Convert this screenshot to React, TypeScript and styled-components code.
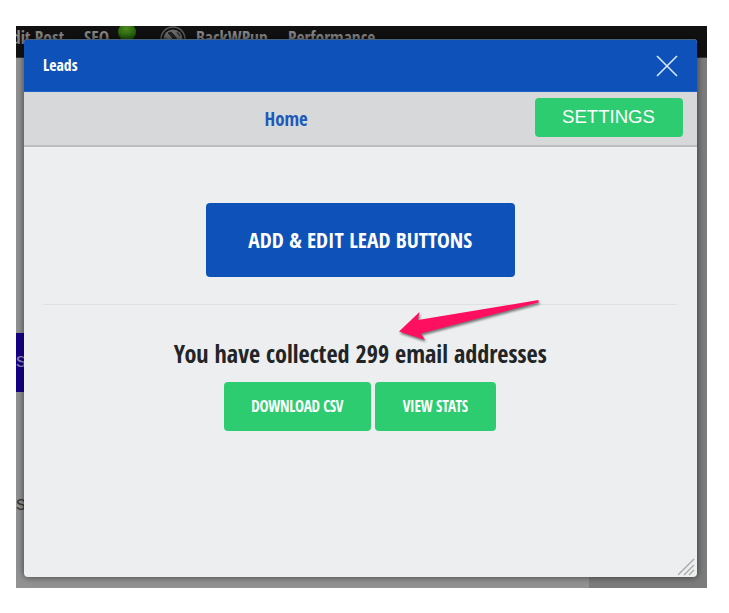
import React from 'react';
import styled, { createGlobalStyle } from 'styled-components';

const Global = createGlobalStyle`
  body { margin: 0; background: #fff; }
  * { box-sizing: border-box; }
`;

const condensed = `'Open Sans Condensed', 'Open Sans', 'Noto Sans', sans-serif`;

const Page = styled.main`
  width: 729px;
  height: 613px;
  padding: 26px 22px 25px 16px;
  overflow: hidden;
`;

const Site = styled.div`
  position: relative;
  height: 562px;
  overflow: hidden;
  background: linear-gradient(to right, #929292 0 573px, #7c7c7c 573px);
  font-family: 'Liberation Sans', Arial, sans-serif;
`;

const AdminBar = styled.div`
  display: flex;
  height: 32px;
  background: #111;
  border-bottom: 1px solid #333;
  color: #858585;
  font: 700 17.5px/23px ${condensed};
  font-stretch: 75%;
`;

const AdminItem = styled.span<{ $gap: number; $width: number }>`
  display: flex;
  flex: none;
  width: ${p => p.$width}px;
  margin-left: ${p => p.$gap}px;
  white-space: nowrap;
`;

const Status = styled.i`
  width: 18px;
  height: 18px;
  margin: -3px 0 0 9px;
  border-radius: 50%;
  background: radial-gradient(circle at 45% 30%, #4f8a20, #205b08 65%, #123d04);
`;

const SiteBlock = styled.div<{ $gap: number; $height: number; $bg: string; $color: string }>`
  width: 60px;
  height: ${p => p.$height}px;
  margin-top: ${p => p.$gap}px;
  background: ${p => p.$bg};
  color: ${p => p.$color};
  font-size: 20px;
  line-height: ${p => p.$height - 4}px;
`;

const Modal = styled.section`
  position: absolute;
  left: 8px;
  top: 13px;
  width: 672.5px;
  height: 538px;
  overflow: hidden;
  border-radius: 4px;
  background: #edeeef;
  box-shadow: 0 0 7px rgba(0, 0, 0, 0.6);
`;

const Header = styled.header`
  display: flex;
  align-items: center;
  justify-content: space-between;
  height: 53px;
  padding: 0 19px 0 19px;
  background: #0e52b9;
  border-top: 1px solid #47627f;
  border-bottom: 1px solid #1b62c6;
`;

const Nav = styled.nav`
  display: grid;
  grid-template-columns: 1fr 148px;
  align-items: center;
  height: 55px;
  padding: 0 14px 2px 13px;
  background: #d7d8da;
  border-bottom: 2px solid #bcbdbf;
`;

const Label = styled.span<{ $size: number; $color?: string; $space?: number }>`
  display: inline-block;
  color: ${p => p.$color ?? '#fff'};
  font-family: ${condensed};
  font-weight: 700;
  font-stretch: 75%;
  font-size: ${p => p.$size}px;
  line-height: 1.3;
  letter-spacing: ${p => p.$space ?? 0}px;
  white-space: nowrap;
`;

const Button = styled.button<{ $w: number; $h: number; $bg: string }>`
  display: flex;
  align-items: center;
  justify-content: center;
  width: ${p => p.$w}px;
  height: ${p => p.$h}px;
  padding: 0;
  border: 0;
  border-radius: 4px;
  background: ${p => p.$bg};
  color: #fff;
  font: 18.6px 'Liberation Sans', Arial, sans-serif;
`;

const SettingsButton = styled(Button)`
  padding-bottom: 1px;
`;

const HomeLink = styled.div`
  padding: 3px 0 0 227.5px;
`;

const Content = styled.div`
  display: flex;
  flex-direction: column;
  align-items: center;
  padding: 56px 19px 0;
`;

const Rule = styled.hr`
  width: 634px;
  height: 1px;
  margin: 27px 0 0;
  border: 0;
  background: #dfe0e2;
`;

const Summary = styled.div`
  display: flex;
  align-items: center;
  height: 77px;
  padding-top: 21px;
`;

const Actions = styled.div`
  display: flex;
  gap: 4px;
  margin-right: 1px;
`;

const Arrow = styled.svg`
  position: absolute;
  left: 370px;
  top: 255px;
  filter: drop-shadow(1px 2px 1px rgba(0, 0, 0, 0.5));
`;

const Grip = styled.svg`
  position: absolute;
  right: 1px;
  bottom: 1px;
`;

export default function App() {
  return (
    <Page>
      <Global />
      <Site>
        <AdminBar>
          <AdminItem $gap={-11.5} $width={79.5}>Edit Post</AdminItem>
          <AdminItem $gap={0} $width={68}>SEO <Status /></AdminItem>
          <AdminItem $gap={8} $width={26}>
            <svg width="26" height="26" viewBox="0 0 26 26" fill="none" stroke="#5c5c5c">
              <circle cx="13" cy="13" r="12" strokeWidth="1.5" />
              <circle cx="13" cy="13" r="9.5" fill="#686868" stroke="none" />
              <path d="M8 7l3-1 3 3 5 7-6-3-2-3z" fill="#222" stroke="#222" />
              <path d="M5 12l5 6M17 6l3 4" stroke="#333" strokeWidth="1.5" />
            </svg>
          </AdminItem>
          <AdminItem $gap={10} $width={92}>BackWPup</AdminItem>
          <AdminItem $gap={0} $width={100}>Performance</AdminItem>
        </AdminBar>
        <SiteBlock $gap={275} $height={59} $bg="#160087" $color="#8f86b1">s</SiteBlock>
        <SiteBlock $gap={83} $height={60} $bg="transparent" $color="#3b3b3b">s</SiteBlock>
        <Modal>
          <Header>
            <Label $size={15.7}>Leads</Label>
            <svg width="22" height="22" viewBox="0 0 22 22" stroke="#d9e7ff" strokeWidth="1.6">
              <path d="M1 1l20 20M21 1L1 21" />
            </svg>
          </Header>
          <Nav>
            <HomeLink><Label $size={18.8} $color="#1c59b9">Home</Label></HomeLink>
            <SettingsButton $w={148} $h={39} $bg="#2ecc71">SETTINGS</SettingsButton>
          </Nav>
          <Content>
            <Button $w={309} $h={74} $bg="#0e52b9"><Label $size={21.5}>ADD &amp; EDIT LEAD BUTTONS</Label></Button>
            <Rule />
            <Summary><Label $size={24.2} $color="#222425">You have collected 299 email addresses</Label></Summary>
            <Actions>
              <Button $w={147} $h={49} $bg="#2ecc71"><Label $size={15.2} $space={-0.3}>DOWNLOAD CSV</Label></Button>
              <Button $w={121} $h={49} $bg="#2ecc71"><Label $size={15.2} $space={-0.2}>VIEW STATS</Label></Button>
            </Actions>
          </Content>
          <Arrow width="150" height="50" viewBox="394 294 150 50">
            <path d="M538.5 300 L418 320 L419.5 312 L399 331.5 L425 340 L421 333.5 L538.5 302.5Z" fill="#ff0f60" />
          </Arrow>
          <Grip width="18" height="18" viewBox="0 0 18 18" stroke="#aaa" strokeWidth="1.4">
            <path d="M0 17L16 1M6 17L16 7M11 17L16 12" />
          </Grip>
        </Modal>
      </Site>
    </Page>
  );
}
